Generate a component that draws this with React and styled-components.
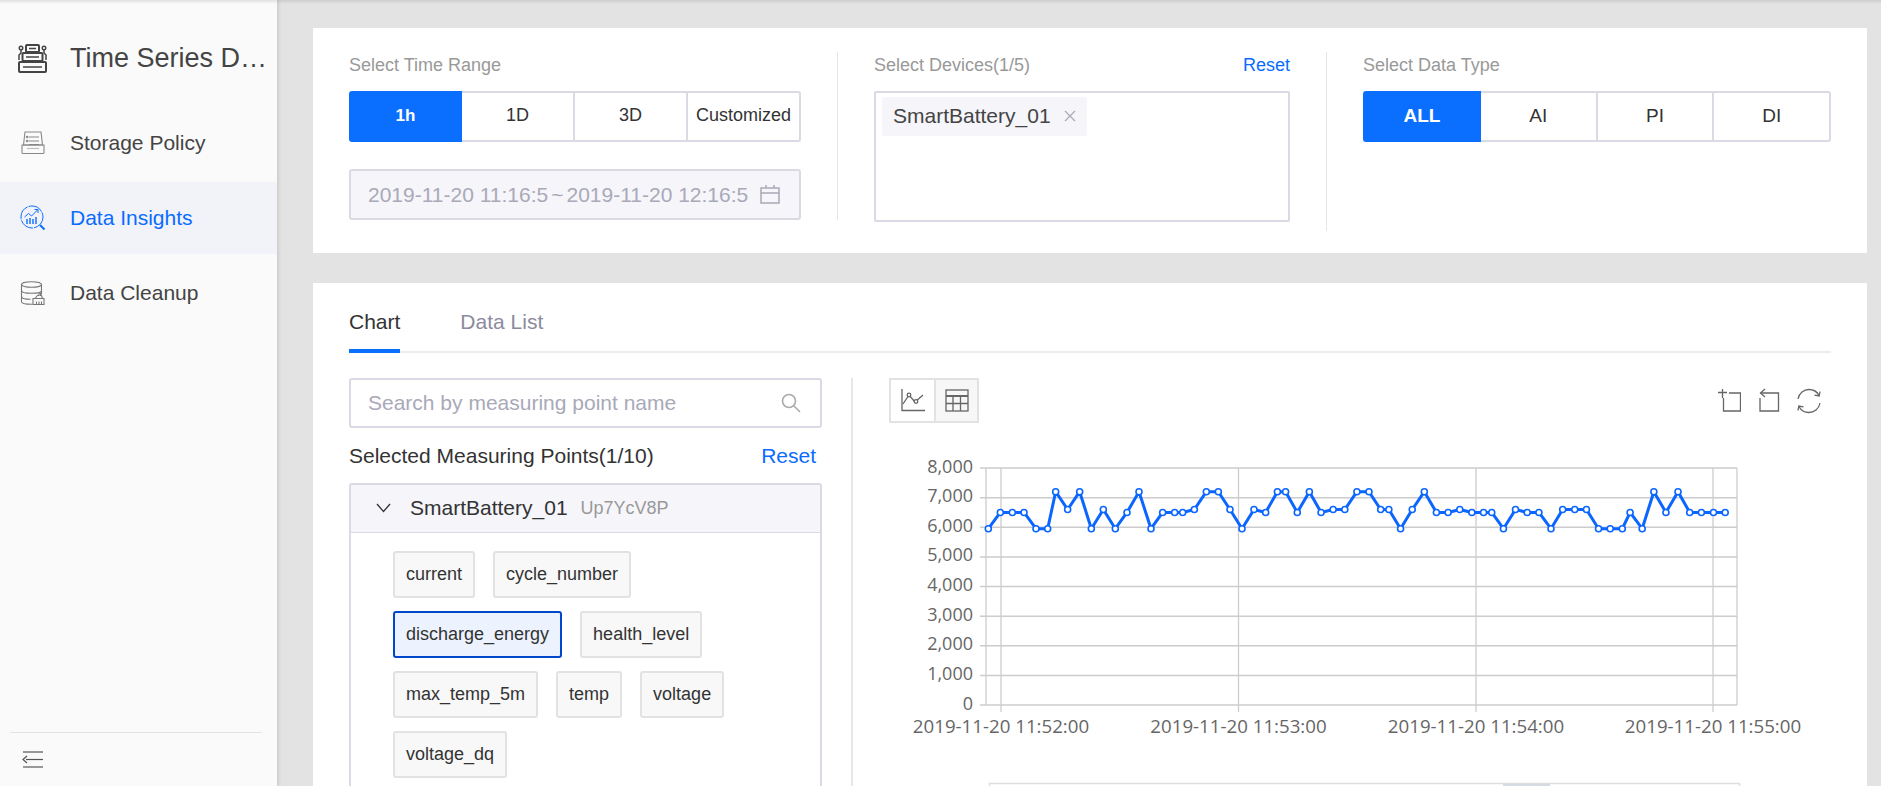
import React from "react";
import styled, { createGlobalStyle } from "styled-components";

const GlobalStyle = createGlobalStyle`
  html, body {
    margin: 0;
    padding: 0;
    height: 100%;
    overflow: hidden;
    font-family: "Liberation Sans", Arial, sans-serif;
  }
  * {
    box-sizing: border-box;
  }
`;

const Page = styled.div`
  position: relative;
  display: flex;
  height: 100vh;
  overflow: hidden;
  background: #e3e3e3;

  &::before {
    content: "";
    position: absolute;
    top: 0;
    left: 0;
    right: 0;
    height: 4px;
    background: linear-gradient(rgba(0, 0, 0, 0.1), rgba(0, 0, 0, 0));
    z-index: 5;
  }
`;

const Sidebar = styled.aside`
  display: flex;
  flex-direction: column;
  flex: 0 0 277px;
  background: #fafafa;
  box-shadow: 2px 0 3px rgba(0, 0, 0, 0.1);
  z-index: 2;
`;
const Brand = styled.div`
  display: flex;
  align-items: center;
  height: 107px;
  padding: 10px 0 0 17px;
`;
const BrandName = styled.div`
  margin: 0 0 0 22px;
  font-size: 27px;
  color: #444;
  white-space: nowrap;
`;
const NavItem = styled.div`
  display: flex;
  align-items: center;
  height: 72px;
  margin-bottom: 3px;
  padding-left: 20px;
  column-gap: 24px;
  font-size: 21px;
  color: ${(p) => (p.$active ? "#0a6cff" : "#444")};
  background: ${(p) => (p.$active ? "#f2f3f9" : "transparent")};
`;
const SideFooter = styled.div`
  margin: auto 15px 0 10px;
  height: 54px;
  padding: 18px 0 0 12px;
  border-top: 1px solid #e4e4e4;
`;

const Main = styled.main`
  flex: 1;
  min-width: 0;
  padding: 28px 14px 0 36px;
`;
const Card = styled.section`
  background: #fff;
`;
const FilterCard = styled(Card)`
  display: flex;
  align-items: flex-start;
  height: 225px;
  padding-top: 24px;
  margin-bottom: 30px;
`;
const FilterGroup = styled.div`
  flex: 0 0 ${(p) => p.$width}px;
  padding: 0 36px;
  height: ${(p) => p.$height}px;
  border-right: ${(p) => (p.$divider ? "1px solid #e6e6ea" : "none")};
`;
const LabelRow = styled.div`
  display: flex;
  justify-content: space-between;
  height: 39px;
  padding-top: 1px;
  font-size: 18px;
  line-height: 25px;
  color: #999;
`;
const LinkText = styled.span`
  color: #0a6cff;
  cursor: pointer;
`;
const Segments = styled.div`
  display: flex;
  height: 51px;
`;
const Segment = styled.button`
  position: relative;
  flex: ${(p) => (p.$basis ? `0 0 ${p.$basis}px` : "1")};
  margin-left: ${(p) => (p.$basis ? "0" : "-2px")};
  padding: 0 0 2px;
  font-family: inherit;
  font-size: ${(p) => p.$size}px;
  font-weight: ${(p) => (p.$basis ? 700 : 400)};
  color: ${(p) => (p.$basis ? "#fff" : "#333")};
  background: ${(p) => (p.$basis ? "#0a6fff" : "#fff")};
  border: 2px solid ${(p) => (p.$basis ? "#0a6fff" : "#d9dae3")};
  border-radius: ${(p) => (p.$basis ? "3px 0 0 3px" : "0")};
  z-index: ${(p) => (p.$basis ? 1 : 0)};
  &:last-child {
    border-radius: 0 3px 3px 0;
  }
`;
const DateBox = styled.div`
  display: flex;
  align-items: center;
  height: 51px;
  margin-top: 27px;
  padding: 0 19px 0 17px;
  font-size: 21px;
  color: #a9a9b8;
  white-space: nowrap;
  background: #f5f5fa;
  border: 2px solid #d9dae3;
  border-radius: 3px;
`;
const Tilde = styled.span`
  margin: 0 3px 0 3px;
`;
const DateIconSlot = styled.span`
  display: flex;
  margin-left: auto;
`;
const DeviceBox = styled.div`
  height: 131px;
  padding: 4px 6px;
  border: 2px solid #d9dae3;
  border-radius: 2px;
`;
const DeviceTag = styled.span`
  display: inline-flex;
  align-items: center;
  height: 39px;
  width: 205px;
  padding: 0 0 2px 11px;
  font-size: 21px;
  color: #444;
  background: #f5f5fa;
  border-radius: 3px;
`;
const TagClose = styled.span`
  display: flex;
  margin-left: 13px;
`;

const TabBar = styled.div`
  display: flex;
  column-gap: 60px;
  height: 70px;
  border-bottom: 2px solid #ececf0;
`;
const Tab = styled.div`
  height: 70px;
  padding-top: 25px;
  font-size: 21px;
  line-height: 28px;
  color: ${(p) => (p.$active ? "#333" : "#8b8b9c")};
  border-bottom: 4px solid ${(p) => (p.$active ? "#0a6fff" : "transparent")};
`;
const ChartCard = styled(Card)`
  padding: 0 36px;
`;
const ChartBody = styled.div`
  display: flex;
  padding-top: 25px;
`;
const LeftPane = styled.div`
  flex: 0 0 473px;
  margin-right: 29px;
`;
const SearchBox = styled.div`
  display: flex;
  align-items: center;
  justify-content: space-between;
  height: 50px;
  padding: 0 19px 0 17px;
  font-size: 21px;
  color: #a9a9b8;
  border: 2px solid #d9dae3;
  border-radius: 3px;
`;
const SelectedRow = styled.div`
  display: flex;
  justify-content: space-between;
  align-items: center;
  height: 55px;
  padding-right: 6px;
  font-size: 21px;
  color: #333;
`;
const GroupHead = styled.div`
  display: flex;
  align-items: center;
  height: 50px;
  padding: 0 0 1px 25px;
  background: #f5f5fa;
  border: 2px solid #d9dae3;
  border-bottom-width: 1px;
  border-radius: 3px 3px 0 0;
`;
const GroupName = styled.span`
  margin-left: 19px;
  font-size: 21px;
  color: #333;
`;
const GroupCode = styled.span`
  margin-left: 13px;
  font-size: 18px;
  color: #999;
`;
const GroupBody = styled.div`
  display: flex;
  flex-wrap: wrap;
  gap: 13px 18px;
  padding: 18px 40px 40px 42px;
  border: 2px solid #d9dae3;
  border-top: none;
`;
const PointTag = styled.div`
  display: flex;
  align-items: center;
  height: 47px;
  padding: 0 11px;
  font-size: 18px;
  color: #333;
  background: ${(p) => (p.$active ? "#ecf3fe" : "#f8f8f8")};
  border: 2px solid ${(p) => (p.$active ? "#0047cc" : "#e2e2e2")};
  border-radius: 3px;
`;
const RightPane = styled.div`
  flex: 1;
  min-width: 0;
  border-left: 2px solid #e6e6ea;
`;
const ChartToolbar = styled.div`
  display: flex;
  justify-content: space-between;
  align-items: flex-start;
  height: 62px;
  padding: 0 10px 0 36px;
`;
const ViewSwitch = styled.div`
  display: flex;
  height: 45px;
  border: 2px solid #e2e2e2;
`;
const ViewButton = styled.div`
  display: flex;
  align-items: center;
  justify-content: center;
  width: 43px;
  background: ${(p) => (p.$active ? "#fff" : "#f7f7f7")};
  & + & {
    border-left: 2px solid #e2e2e2;
  }
`;
const Toolbox = styled.div`
  display: flex;
  column-gap: 16px;
  padding-top: 10px;
`;
const ChartSvg = styled.svg`
  display: block;
  width: 976px;
  height: 346px;
`;
const AxisText = styled.text`
  font-family: "Open Sans", sans-serif;
  font-size: ${(p) => p.$size}px;
  fill: #666;
`;

const LogoIcon = () => (
  <svg width="31" height="29" viewBox="0 0 31 29" fill="none" stroke="#444" strokeWidth="2">
    <rect x="9" y="1" width="13" height="7" rx="1" />
    <rect x="5.5" y="9" width="20" height="8" rx="1" />
    <rect x="2" y="18" width="27" height="10" rx="1" />
    <path d="M12 4.5h7M9 13h13M6 23h19" strokeWidth="1.5" />
    <circle cx="4" cy="4" r="1.8" strokeWidth="1.4" />
    <circle cx="27" cy="4" r="1.8" strokeWidth="1.4" />
    <path d="M4 6v3L2 11v5M27 6v3l2 2v5" strokeWidth="1.5" />
  </svg>
);

const StorageIcon = () => (
  <svg width="26" height="24" viewBox="0 0 26 24" fill="none" stroke="#888" strokeWidth="1.1">
    <path d="M5 1h16l1.5 13H3.5z" />
    <path d="M2 14h22v7.5a1 1 0 0 1-1 1H3a1 1 0 0 1-1-1z" />
    <path d="M9 6h10M9 10h10M9 13.500h10" />
    <circle cx="7.200" cy="6" r=".8" />
    <circle cx="7.200" cy="10" r=".8" />
    <path d="M7 17.500h12" stroke="#bbb" />
  </svg>
);

const InsightIcon = () => (
  <svg width="26" height="26" viewBox="0 0 26 26" fill="none" stroke="#0a6cff" strokeWidth="1">
    <circle cx="12" cy="12" r="11" strokeDasharray="15 1" />
    <path d="M4.500 12l4-3.500 3 2.500 6-6" />
    <path d="M14.500 4.500h3.500v3.500" />
    <path d="M7 19v-5M10 19v-6M13 19v-5M16 19v-7" strokeWidth="1.4" />
    <path d="M20 20l4.500 4.500" strokeWidth="2" />
  </svg>
);

const CleanupIcon = () => (
  <svg width="26" height="25" viewBox="0 0 26 25" fill="none" stroke="#777" strokeWidth="1.1">
    <ellipse cx="11.500" cy="3.500" rx="10" ry="2.800" />
    <path d="M1.500 3.500v17c0 1.800 4 2.800 10 2.800h1" />
    <path d="M21.500 3.500v10" />
    <path d="M1.500 9.500c0 1.800 4 2.800 10 2.800s10-1 10-2.800" />
    <path d="M1.500 15.500c0 1.800 4 2.800 9 2.800" />
    <path d="M13 23.500v-6h11v6z" fill="#fafafa" />
    <path d="M15 17.500l2.500-3h1.500v-2.500h1.500v2.500h1l1 3" />
    <path d="M16.500 23.500v-3M19 23.500v-3M21.500 23.500v-3" />
  </svg>
);

const CollapseIcon = () => (
  <svg width="21" height="17" viewBox="0 0 21 17" fill="none" stroke="#555" strokeWidth="1.2">
    <path d="M1 1h20" />
    <path d="M4 8.500h17" />
    <path d="M5 5l-4 3.500L5 12" />
    <path d="M1 16h20" stroke="#999" strokeWidth="2" />
  </svg>
);

const CalendarIcon = () => (
  <svg width="20" height="19" viewBox="0 0 20 19" fill="none" stroke="#a9a9b8" strokeWidth="1.500">
    <rect x="1" y="3" width="18" height="15" />
    <path d="M1 8h18M6 0v3M14 0v3" />
  </svg>
);

const CloseIcon = () => (
  <svg width="12" height="12" viewBox="0 0 12 12" fill="none" stroke="#a9a9b8" strokeWidth="1.200">
    <path d="M1 1l10 10M11 1L1 11" />
  </svg>
);

const SearchIcon = () => (
  <svg width="20" height="20" viewBox="0 0 20 20" fill="none" stroke="#aaa" strokeWidth="1.600">
    <circle cx="8" cy="8" r="6.500" />
    <path d="M13 13l6 6" />
  </svg>
);

const ChevronIcon = () => (
  <svg width="15" height="10" viewBox="0 0 15 10" fill="none" stroke="#333" strokeWidth="1.300">
    <path d="M1 1l6.500 7.500L14 1" />
  </svg>
);

const LineChartIcon = () => (
  <svg width="24" height="23" viewBox="0 0 24 23" fill="none" stroke="#666" strokeWidth="1.300">
    <path d="M1 0v21.500h23" />
    <path d="M2 15l6-9 6 7 8-7" />
    <circle cx="8" cy="6" r="1.800" fill="#fff" />
    <circle cx="15" cy="12.500" r="1.800" fill="#fff" />
  </svg>
);

const TableIcon = () => (
  <svg width="24" height="23" viewBox="0 0 24 23" fill="none" stroke="#666" strokeWidth="1.300">
    <rect x="1" y="1" width="22" height="21" />
    <path d="M1 7h22" strokeWidth="2" />
    <path d="M1 14.500h22M8 7v15M15.500 7v15" />
  </svg>
);

const ZoomInIcon = () => (
  <svg width="24" height="24" viewBox="0 0 24 24" fill="none" stroke="#666" strokeWidth="1.300">
    <path d="M1 4.500h9M5.500 1v9" />
    <path d="M12 5h11.500v18H6.500V10" />
  </svg>
);

const ZoomBackIcon = () => (
  <svg width="24" height="24" viewBox="0 0 24 24" fill="none" stroke="#666" strokeWidth="1.300">
    <path d="M3 10v13h18.500V5H3.500" />
    <path d="M8 1L3.500 5 8 9" />
  </svg>
);

const RefreshIcon = () => (
  <svg width="24" height="26" viewBox="0 0 24 26" fill="none" stroke="#666" strokeWidth="1.300">
    <path d="M1 11C2 5 7 1.500 12 1.500c4 0 8 2 10 6" />
    <path d="M23 15c-1 6-6 9.500-11 9.500-4 0-8-2-10-6" />
    <path d="M23 3.500l-.8 4.500-4.700-.8" />
    <path d="M1 22.500l.8-4.500 4.700.8" />
  </svg>
);

// pixel x of each sample, read off the picture, with its value
const SAMPLES = [
  [355, 5950], [391, 6500], [427, 6500], [462, 6500], [498, 5950], [533, 5950], [557, 7200], [593, 6600],
  [629, 7200], [664, 5950], [700, 6600], [736, 5950], [771, 6500], [807, 7200], [843, 5950], [878, 6500],
  [914, 6500], [938, 6500], [973, 6600], [1009, 7200], [1045, 7200], [1080, 6600], [1116, 5950], [1152, 6600],
  [1187, 6500],
].map(([x, v]) => [870 + x / 3, v]).concat(
  [
    [19, 7200], [40, 7200], [70, 6500], [101, 7200], [131, 6500], [162, 6600], [192, 6600], [223, 7200],
    [254, 7200], [284, 6600], [305, 6600], [335, 5950], [365, 6600], [396, 7200], [427, 6500], [457, 6500],
    [487, 6600], [518, 6500], [548, 6500], [569, 6500], [599, 5950], [630, 6600], [660, 6500], [690, 6500],
    [721, 5950], [751, 6600], [782, 6600], [812, 6600], [843, 5950], [873, 5950], [904, 5950], [924, 6500],
    [955, 5950], [985, 7200], [1016, 6500], [1047, 7200], [1077, 6500], [1107, 6500], [1138, 6500], [1168, 6500],
  ].map(([x, v]) => [1270 + x / 2.566, v])
);

const PLOT = { left: 986, right: 1737, top: 468, bottom: 705 };
const valueY = (v) => PLOT.bottom - (v / 8000) * (PLOT.bottom - PLOT.top);
const Y_TICKS = [0, 1000, 2000, 3000, 4000, 5000, 6000, 7000, 8000];
const X_TICKS = [
  [1001, "2019-11-20 11:52:00"],
  [1238.5, "2019-11-20 11:53:00"],
  [1476, "2019-11-20 11:54:00"],
  [1713, "2019-11-20 11:55:00"],
];

const LineChart = () => (
  <ChartSvg viewBox="853 440 976 346">
    {Y_TICKS.map((v) => (
      <g key={v}>
        <line x1={PLOT.left - 6} x2={PLOT.right} y1={valueY(v)} y2={valueY(v)} stroke="#ccc" strokeWidth="1.500" />
        <AxisText $size={18} x={973} y={valueY(v) + 4.500} textAnchor="end">
          {v.toLocaleString("en-US")}
        </AxisText>
      </g>
    ))}
    <line x1={PLOT.left} x2={PLOT.left} y1={PLOT.top} y2={PLOT.bottom} stroke="#ccc" strokeWidth="1.300" />
    <line x1={PLOT.right} x2={PLOT.right} y1={PLOT.top} y2={PLOT.bottom} stroke="#ccc" strokeWidth="1.300" />
    {X_TICKS.map(([x, label]) => (
      <g key={label}>
        <line x1={x} x2={x} y1={PLOT.top} y2={712} stroke="#ccc" strokeWidth="1.300" />
        <AxisText $size={18.7} x={x} y={733} textAnchor="middle">
          {label}
        </AxisText>
      </g>
    ))}
    <polyline
      points={SAMPLES.map(([x, v]) => `${x},${valueY(v)}`).join(" ")}
      fill="none"
      stroke="#0a66ff"
      strokeWidth="3"
      strokeLinejoin="round"
    />
    {SAMPLES.map(([x, v]) => (
      <circle key={x} cx={x} cy={valueY(v)} r="3" fill="#fff" stroke="#0a66ff" strokeWidth="1.600" />
    ))}
    <rect x="989.500" y="783.500" width="750" height="10" fill="#fff" stroke="#ddd" strokeWidth="1.500" />
    <rect x="1503" y="784" width="47" height="4" fill="#d6dae3" />
  </ChartSvg>
);

const POINTS = [
  "current",
  "cycle_number",
  "discharge_energy",
  "health_level",
  "max_temp_5m",
  "temp",
  "voltage",
  "voltage_dq",
];

const App = () => {
  return (
    <Page>
      <GlobalStyle />
      <Sidebar>
        <Brand>
          <LogoIcon />
          <BrandName>Time Series D…</BrandName>
        </Brand>
        <NavItem>
          <StorageIcon />
          Storage Policy
        </NavItem>
        <NavItem $active>
          <InsightIcon />
          Data Insights
        </NavItem>
        <NavItem>
          <CleanupIcon />
          Data Cleanup
        </NavItem>
        <SideFooter>
          <CollapseIcon />
        </SideFooter>
      </Sidebar>
      <Main>
        <FilterCard>
          <FilterGroup $width={525} $height={168} $divider>
            <LabelRow>Select Time Range</LabelRow>
            <Segments>
              <Segment $size={17} $basis={113}>1h</Segment>
              <Segment $size={18}>1D</Segment>
              <Segment $size={18}>3D</Segment>
              <Segment $size={18}>Customized</Segment>
            </Segments>
            <DateBox>
              <span>2019-11-20 11:16:5</span>
              <Tilde>~</Tilde>
              <span>2019-11-20 12:16:5</span>
              <DateIconSlot>
                <CalendarIcon />
              </DateIconSlot>
            </DateBox>
          </FilterGroup>
          <FilterGroup $width={489} $height={179} $divider>
            <LabelRow>
              Select Devices(1/5)
              <LinkText>Reset</LinkText>
            </LabelRow>
            <DeviceBox>
              <DeviceTag>
                SmartBattery_01
                <TagClose>
                  <CloseIcon />
                </TagClose>
              </DeviceTag>
            </DeviceBox>
          </FilterGroup>
          <FilterGroup $width={540} $height={168}>
            <LabelRow>Select Data Type</LabelRow>
            <Segments>
              <Segment $size={19} $basis={118}>ALL</Segment>
              <Segment $size={19}>AI</Segment>
              <Segment $size={19}>PI</Segment>
              <Segment $size={19}>DI</Segment>
            </Segments>
          </FilterGroup>
        </FilterCard>
        <ChartCard>
          <TabBar>
            <Tab $active>Chart</Tab>
            <Tab>Data List</Tab>
          </TabBar>
          <ChartBody>
            <LeftPane>
              <SearchBox>
                Search by measuring point name
                <SearchIcon />
              </SearchBox>
              <SelectedRow>
                Selected Measuring Points(1/10)
                <LinkText>Reset</LinkText>
              </SelectedRow>
              <GroupHead>
                <ChevronIcon />
                <GroupName>SmartBattery_01</GroupName>
                <GroupCode>Up7YcV8P</GroupCode>
              </GroupHead>
              <GroupBody>
                {POINTS.map((name) => (
                  <PointTag key={name} $active={name === "discharge_energy"}>
                    {name}
                  </PointTag>
                ))}
              </GroupBody>
            </LeftPane>
            <RightPane>
              <ChartToolbar>
                <ViewSwitch>
                  <ViewButton $active>
                    <LineChartIcon />
                  </ViewButton>
                  <ViewButton>
                    <TableIcon />
                  </ViewButton>
                </ViewSwitch>
                <Toolbox>
                  <ZoomInIcon />
                  <ZoomBackIcon />
                  <RefreshIcon />
                </Toolbox>
              </ChartToolbar>
              <LineChart />
            </RightPane>
          </ChartBody>
        </ChartCard>
      </Main>
    </Page>
  );
};

export default App;
